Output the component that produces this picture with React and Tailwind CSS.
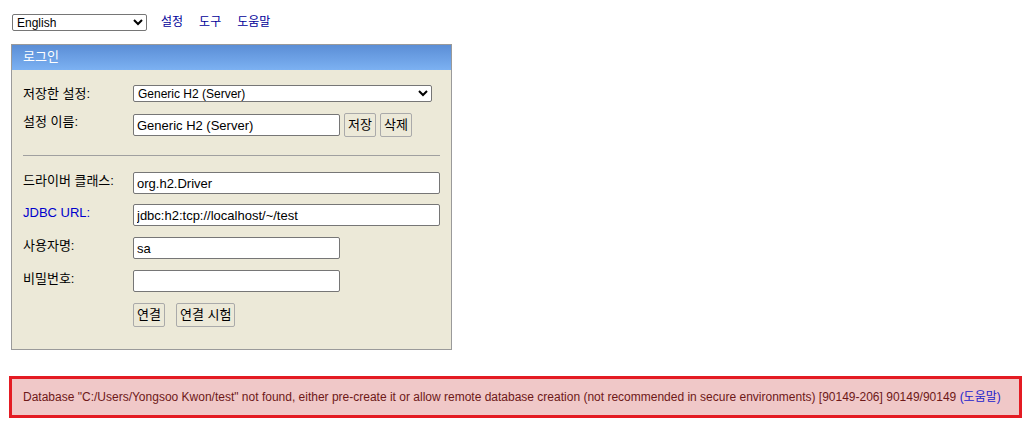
import React from 'react';

const labelFont = { fontFamily: 'Arial, "Liberation Sans", "Noto Sans CJK KR", sans-serif' };

const Field = ({ label, blue, children, className = '' }) => (
  <div className={`flex items-start ${className}`}>
    <div className={`w-[110px] shrink-0 pt-[1px] text-[13px] leading-[16px] ${blue ? 'text-[#0000cc]' : 'text-black'}`}>{label}</div>
    <div className="flex items-center gap-[4px]">{children}</div>
  </div>
);

const TextInput = ({ value, w }) => (
  <input
    readOnly
    value={value}
    className={`block h-[22px] ${w} rounded-[2px] border border-[#767676] bg-white px-[3px] text-[13px] leading-[16px] text-black outline-none`}
    style={labelFont}
  />
);

const Btn = ({ children }) => (
  <button className="block h-[24px] rounded-[2px] border border-[#aaaaaa] bg-[#ece9d8] px-[3px] text-[13px] leading-[16px] text-black">
    {children}
  </button>
);

export default function App() {
  return (
    <div className="min-h-[430px] bg-white" style={labelFont}>
      <div className="flex h-[16px] items-center gap-[14px] pl-[12px] mt-[14px]">
        <select className="block h-[17px] w-[135px] rounded-[2px] border border-[#767676] bg-white text-[12px] text-black" style={labelFont}>
          <option>English</option>
        </select>
        <div className="flex gap-[16px] text-[12px] leading-[16px] text-[#000099]">
          <span>설정</span>
          <span>도구</span>
          <span>도움말</span>
        </div>
      </div>

      <div className="ml-[11px] mt-[14px] w-[441px] border border-[#9a9a9a] bg-[#ece9d8]">
        <div className="h-[25px] bg-gradient-to-b from-[#5b8ed6] to-[#7cb1f2] pl-[11px] pt-[4px] text-[13px] leading-[16px] text-white">
          로그인
        </div>
        <div className="px-[11px] pb-[22px] pt-[15px]">
          <Field label="저장한 설정:">
            <select className="block h-[17px] w-[299px] rounded-[2px] border border-[#767676] bg-white text-[12px] text-black" style={labelFont}>
              <option>Generic H2 (Server)</option>
            </select>
          </Field>
          <Field label="설정 이름:" className="mt-[11px]">
            <TextInput value="Generic H2 (Server)" w="w-[207px]" />
            <Btn>저장</Btn>
            <Btn>삭제</Btn>
          </Field>
          <div className="mt-[18px] h-0 border-t border-[#a0a0a0]" />
          <Field label="드라이버 클래스:" className="mt-[16px]">
            <TextInput value="org.h2.Driver" w="w-[307px]" />
          </Field>
          <Field label="JDBC URL:" blue className="mt-[10px]">
            <TextInput value="jdbc:h2:tcp://localhost/~/test" w="w-[307px]" />
          </Field>
          <Field label="사용자명:" className="mt-[11px]">
            <TextInput value="sa" w="w-[207px]" />
          </Field>
          <Field label="비밀번호:" className="mt-[11px]">
            <TextInput value="" w="w-[207px]" />
          </Field>
          <div className="mt-[11px] flex gap-[11px] pl-[110px]">
            <Btn>연결</Btn>
            <Btn>연결 시험</Btn>
          </div>
        </div>
      </div>

      <div className="ml-[9px] mt-[26px] mr-[1px] flex h-[42px] items-center border-[3px] border-[#e41b23] bg-[#f0c8c8] pl-[11px] text-[12px] text-[#6e1818]">
        Database "C:/Users/Yongsoo Kwon/test" not found, either pre-create it or allow remote database creation (not recommended in secure environments) [90149-206] 90149/90149&nbsp;
        <span className="text-[#2222cc]">(도움말)</span>
      </div>
    </div>
  );
}
